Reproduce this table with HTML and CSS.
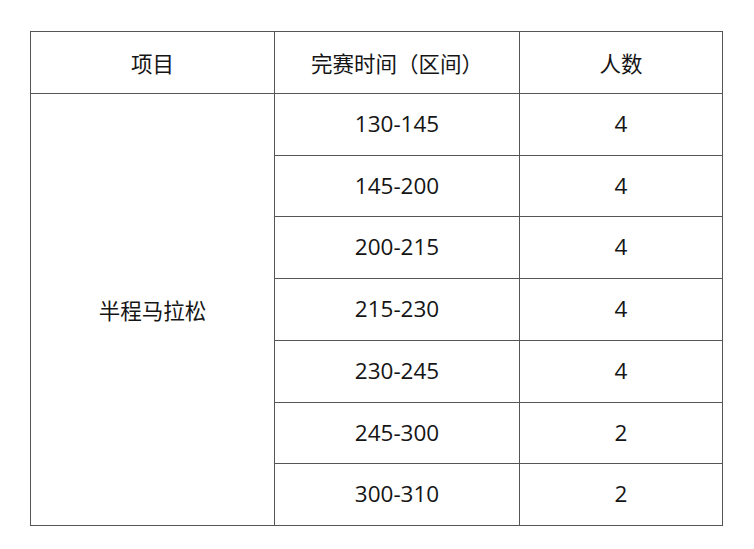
FILE: index.html
```html
<!DOCTYPE html>
<html lang="zh">
<head>
<meta charset="utf-8">
<link rel="stylesheet" href="styles.css">
</head>
<body>
<table class="stats">
  <colgroup>
    <col class="c1"><col class="c2"><col class="c3">
  </colgroup>
  <thead>
    <tr><th>项目</th><th>完赛时间（区间）</th><th>人数</th></tr>
  </thead>
  <tbody>
    <tr><td rowspan="7">半程马拉松</td><td class="num">130-145</td><td class="num">4</td></tr>
    <tr><td class="num">145-200</td><td class="num">4</td></tr>
    <tr><td class="num">200-215</td><td class="num">4</td></tr>
    <tr><td class="num">215-230</td><td class="num">4</td></tr>
    <tr><td class="num">230-245</td><td class="num">4</td></tr>
    <tr><td class="num">245-300</td><td class="num">2</td></tr>
    <tr><td class="num">300-310</td><td class="num">2</td></tr>
  </tbody>
</table>
</body>
</html>
```
FILE: styles.css
```css
html, body {
  margin: 0;
  padding: 0;
  background: #ffffff;
}
body {
  padding: 31px 0 0 30px;
  font-family: "Noto Sans CJK SC", "Noto Sans", sans-serif;
  color: #151515;
}
.stats {
  border-collapse: collapse;
  table-layout: fixed;
  width: 692px;
}
.c1 { width: 244px; }
.c2 { width: 245px; }
.c3 { width: 203px; }
.stats th, .stats td {
  border: 1px solid #555555;
  height: 60.75px;
  padding: 0;
  text-align: center;
  vertical-align: middle;
  font-size: 21.5px;
  font-weight: normal;
  line-height: 1;
}
.stats td.num {
  font-family: "Open Sans", "Noto Sans", sans-serif;
  font-size: 22.5px;
}
```
